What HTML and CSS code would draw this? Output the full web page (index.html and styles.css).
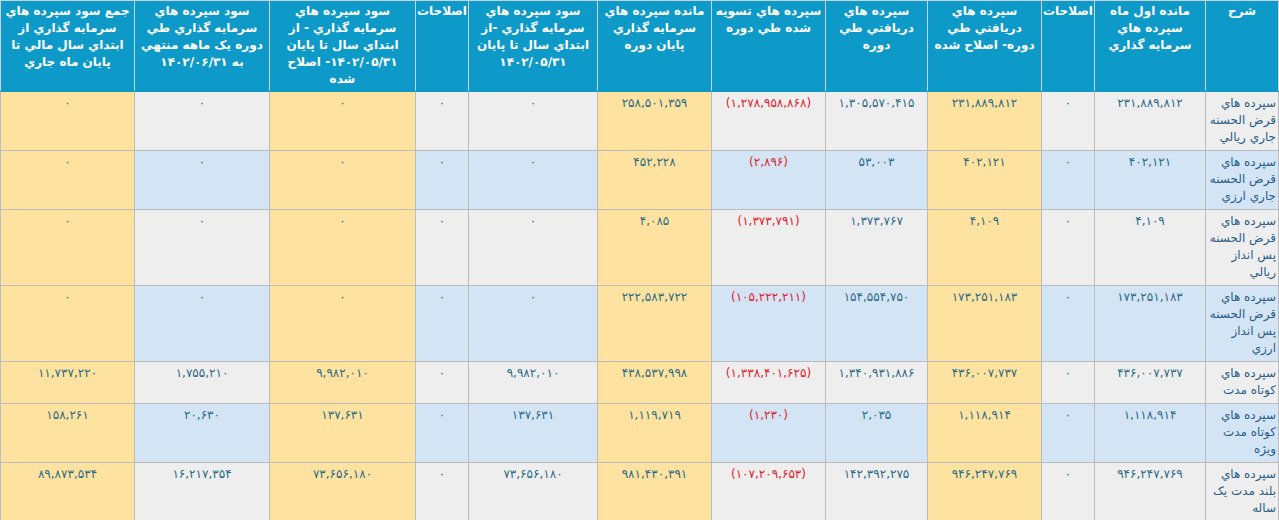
FILE: index.html
```html
<!DOCTYPE html>
<html lang="fa" dir="rtl">
<head>
<meta charset="utf-8">
<title>سپرده ها</title>
<link rel="stylesheet" href="styles.css">
</head>
<body>
<table class="grid">
<colgroup>
<col class="w73"><col class="w111"><col class="w53"><col class="w114"><col class="w102"><col class="w114"><col class="w114"><col class="w129"><col class="w53"><col class="w146"><col class="w135"><col class="w134">
</colgroup>
<thead>
<tr>
<th>شرح</th>
<th>مانده اول ماه<br>سپرده هاي<br>سرمايه گذاري</th>
<th>اصلاحات</th>
<th>سپرده هاي<br>دريافتي طي<br>دوره- اصلاح شده</th>
<th>سپرده هاي<br>دريافتي طي<br>دوره</th>
<th>سپرده هاي تسويه<br>شده طي دوره</th>
<th>مانده سپرده هاي<br>سرمايه گذاري<br>پايان دوره</th>
<th>سود سپرده هاي<br>سرمايه گذاري -از<br>ابتداي سال تا پايان<br>۱۴۰۲/۰۵/۳۱</th>
<th>اصلاحات</th>
<th>سود سپرده هاي<br>سرمايه گذاري - از<br>ابتداي سال تا پايان<br>۱۴۰۲/۰۵/۳۱- اصلاح<br>شده</th>
<th>سود سپرده هاي<br>سرمايه گذاري طي<br>دوره يک ماهه منتهي<br>به ۱۴۰۲/۰۶/۳۱</th>
<th>جمع سود سپرده هاي<br>سرمايه گذاري از<br>ابتداي سال مالي تا<br>پايان ماه جاري</th>
</tr>
</thead>
<tbody>
<tr class="odd">
<td class="desc">سپرده هاي<br>قرض الحسنه<br>جاري ريالي</td>
<td>۲۳۱,۸۸۹,۸۱۲</td><td>۰</td><td class="hl">۲۳۱,۸۸۹,۸۱۲</td><td>۱,۳۰۵,۵۷۰,۴۱۵</td><td class="neg">(۱,۲۷۸,۹۵۸,۸۶۸)</td><td class="hl">۲۵۸,۵۰۱,۳۵۹</td><td>۰</td><td>۰</td><td class="hl">۰</td><td>۰</td><td class="hl">۰</td>
</tr>
<tr class="even">
<td class="desc">سپرده هاي<br>قرض الحسنه<br>جاري ارزي</td>
<td>۴۰۲,۱۲۱</td><td>۰</td><td class="hl">۴۰۲,۱۲۱</td><td>۵۳,۰۰۳</td><td class="neg">(۲,۸۹۶)</td><td class="hl">۴۵۲,۲۲۸</td><td>۰</td><td>۰</td><td class="hl">۰</td><td>۰</td><td class="hl">۰</td>
</tr>
<tr class="odd">
<td class="desc">سپرده هاي<br>قرض الحسنه<br>پس انداز<br>ريالي</td>
<td>۴,۱۰۹</td><td>۰</td><td class="hl">۴,۱۰۹</td><td>۱,۳۷۳,۷۶۷</td><td class="neg">(۱,۳۷۳,۷۹۱)</td><td class="hl">۴,۰۸۵</td><td>۰</td><td>۰</td><td class="hl">۰</td><td>۰</td><td class="hl">۰</td>
</tr>
<tr class="even">
<td class="desc">سپرده هاي<br>قرض الحسنه<br>پس انداز<br>ارزي</td>
<td>۱۷۳,۲۵۱,۱۸۳</td><td>۰</td><td class="hl">۱۷۳,۲۵۱,۱۸۳</td><td>۱۵۴,۵۵۴,۷۵۰</td><td class="neg">(۱۰۵,۲۲۲,۲۱۱)</td><td class="hl">۲۲۲,۵۸۳,۷۲۲</td><td>۰</td><td>۰</td><td class="hl">۰</td><td>۰</td><td class="hl">۰</td>
</tr>
<tr class="odd">
<td class="desc">سپرده هاي<br>کوتاه مدت</td>
<td>۴۳۶,۰۰۷,۷۳۷</td><td>۰</td><td class="hl">۴۳۶,۰۰۷,۷۳۷</td><td>۱,۳۴۰,۹۳۱,۸۸۶</td><td class="neg">(۱,۳۳۸,۴۰۱,۶۲۵)</td><td class="hl">۴۳۸,۵۳۷,۹۹۸</td><td>۹,۹۸۲,۰۱۰</td><td>۰</td><td class="hl">۹,۹۸۲,۰۱۰</td><td>۱,۷۵۵,۲۱۰</td><td class="hl">۱۱,۷۳۷,۲۲۰</td>
</tr>
<tr class="even">
<td class="desc">سپرده هاي<br>کوتاه مدت<br>ويژه</td>
<td>۱,۱۱۸,۹۱۴</td><td>۰</td><td class="hl">۱,۱۱۸,۹۱۴</td><td>۲,۰۳۵</td><td class="neg">(۱,۲۳۰)</td><td class="hl">۱,۱۱۹,۷۱۹</td><td>۱۳۷,۶۳۱</td><td>۰</td><td class="hl">۱۳۷,۶۳۱</td><td>۲۰,۶۳۰</td><td class="hl">۱۵۸,۲۶۱</td>
</tr>
<tr class="odd">
<td class="desc">سپرده هاي<br>بلند مدت يک<br>ساله</td>
<td>۹۴۶,۲۴۷,۷۶۹</td><td>۰</td><td class="hl">۹۴۶,۲۴۷,۷۶۹</td><td>۱۴۲,۳۹۲,۲۷۵</td><td class="neg">(۱۰۷,۲۰۹,۶۵۳)</td><td class="hl">۹۸۱,۴۳۰,۳۹۱</td><td>۷۳,۶۵۶,۱۸۰</td><td>۰</td><td class="hl">۷۳,۶۵۶,۱۸۰</td><td>۱۶,۲۱۷,۳۵۴</td><td class="hl">۸۹,۸۷۳,۵۳۴</td>
</tr>
</tbody>
</table>
</body>
</html>
```
FILE: styles.css
```css
html, body {
  margin: 0;
  padding: 0;
  background: #ffffff;
}
body {
  font-family: "DejaVu Sans", "Noto Sans", sans-serif;
  font-size: 12px;
}
.grid {
  width: 1279px;
  table-layout: fixed;
  border-collapse: collapse;
  direction: rtl;
}
.w73 { width: 73px; }
.w111 { width: 111px; }
.w53 { width: 53px; }
.w114 { width: 114px; }
.w102 { width: 102px; }
.w129 { width: 129px; }
.w146 { width: 146px; }
.w135 { width: 135px; }
.w134 { width: 134px; }
.grid th {
  background: #0e9ac8;
  color: #ffffff;
  font-weight: bold;
  border: 1px solid #c8d3d8;
  border-bottom: 1px solid #0e9ac8;
  padding: 2px 1px 3px;
  line-height: 17px;
  vertical-align: top;
  text-align: center;
  white-space: nowrap;
}
.grid td {
  border: 1px solid #bbbbbb;
  padding: 3px 3px 4px;
  line-height: 17px;
  vertical-align: top;
  text-align: center;
  color: #2c6a86;
  white-space: nowrap;
}
.grid tr.odd td { background: #eeeeee; }
.grid tr.even td { background: #d3e4f5; }
.grid tr td.hl { background: #fee3a0; }
.grid td.desc {
  text-align: right;
  color: #2a5c86;
  padding-right: 2px;
}
.grid td.neg { color: #e3202c; }
```
